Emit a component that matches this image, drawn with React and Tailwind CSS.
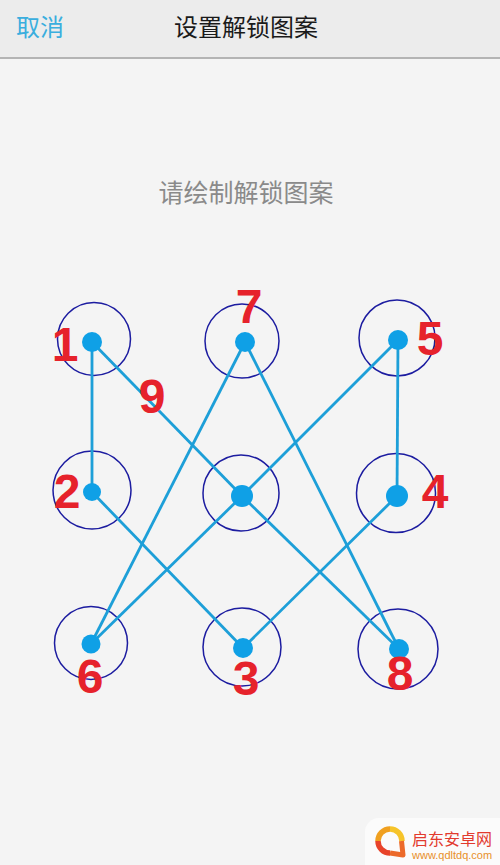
import React from 'react';

const rings = [
  [94, 59, 36.5], [242, 61, 37], [397, 58, 38],
  [92, 210, 39], [241, 213, 38], [396, 213, 39.5],
  [91, 363, 36.5], [242, 367, 39], [398, 369, 40],
];

const dots = {
  one: [92, 62, 10],
  seven: [245, 62, 10],
  five: [398, 60, 10],
  two: [92, 212, 9],
  mid: [242, 216, 11],
  four: [397, 216, 11],
  six: [91, 364, 9.5],
  three: [243, 368, 10],
  eight: [399, 369, 10],
};

const path = ['one', 'two', 'three', 'four', 'five', 'mid', 'six', 'seven', 'eight', 'mid', 'one'];

const labels = [
  { n: '1', x: 65, y: 41 },
  { n: '7', x: 249, y: 3 },
  { n: '9', x: 152, y: 93 },
  { n: '5', x: 430, y: 35 },
  { n: '2', x: 67, y: 188 },
  { n: '4', x: 435, y: 188 },
  { n: '6', x: 90, y: 373 },
  { n: '3', x: 246, y: 375 },
  { n: '8', x: 400, y: 370 },
];

function PatternPad() {
  return (
    <div className="relative h-[440px] w-[500px]">
      <svg width="500" height="440" viewBox="0 0 500 440" className="absolute left-0 top-0">
        {rings.map(([cx, cy, r], i) => (
          <circle key={i} cx={cx} cy={cy} r={r} fill="none" stroke="#1c1ca0" strokeWidth="1.5" />
        ))}
        {path.slice(1).map((key, i) => {
          const a = dots[path[i]];
          const b = dots[key];
          return (
            <line
              key={i}
              x1={a[0]}
              y1={a[1]}
              x2={b[0]}
              y2={b[1]}
              stroke="#1d9fd8"
              strokeWidth="2.8"
            />
          );
        })}
        {Object.entries(dots).map(([key, [cx, cy, r]]) => (
          <circle key={key} cx={cx} cy={cy} r={r} fill="#0fa0e6" />
        ))}
      </svg>
      {labels.map((l) => (
        <span
          key={l.n}
          className="absolute w-[30px] text-center text-[48px] font-bold leading-none text-[#e6222b] [font-family:'Liberation_Sans',Arial,sans-serif]"
          style={{ left: l.x - 15, top: l.y }}
        >
          {l.n}
        </span>
      ))}
    </div>
  );
}

function Watermark() {
  return (
    <div className="absolute bottom-0 right-0 flex h-[47px] w-[135px] items-start gap-[5px] rounded-tl-[14px] bg-[#fbfbfb] pl-[8px] pt-[6px]">
      <svg width="34" height="34" viewBox="0 0 34 34">
        <path d="M5 17 A12 12 0 0 1 17 5" fill="none" stroke="#f0a020" strokeWidth="5.5" />
        <path d="M17 5 A12 12 0 0 1 29 17" fill="none" stroke="#f6c42a" strokeWidth="5.5" />
        <path d="M5 17 A12 12 0 0 0 17 29" fill="none" stroke="#e8432a" strokeWidth="5.5" />
        <path d="M17 29 L30 31 L28.5 17" fill="none" stroke="#ec6a2a" strokeWidth="5" strokeLinejoin="round" />
      </svg>
      <div className="mt-[6px] flex flex-col gap-[4px]">
        <span className="text-[16px] leading-none text-[#e23a2e] [font-family:'Noto_Sans_CJK_SC',sans-serif]">启东安卓网</span>
        <span className="text-[11px] leading-none text-[#e8902a] [font-family:'Liberation_Sans',Arial,sans-serif]">
          www.qdltdq.com
        </span>
      </div>
    </div>
  );
}

export default function App() {
  return (
    <div className="relative flex min-h-[865px] w-[500px] flex-col bg-[#f4f4f4] [font-family:'Noto_Sans_CJK_SC','Noto_Sans',sans-serif]">
      <header className="relative flex h-[59px] items-start justify-center border-b-2 border-[#b4b4b4] bg-[#ececec] pt-[9px]">
        <button className="absolute left-[16px] top-[9px] text-[24px] leading-[34px] text-[#3aaede]">取消</button>
        <h1 className="-ml-[8px] text-[24px] leading-[34px] text-[#1a1a1a]">设置解锁图案</h1>
      </header>
      <p className="-ml-[8px] mt-[117px] text-center text-[25px] leading-[30px] text-[#8a8a8a]">请绘制解锁图案</p>
      <div className="mt-[74px]">
        <PatternPad />
      </div>
      <Watermark />
    </div>
  );
}
